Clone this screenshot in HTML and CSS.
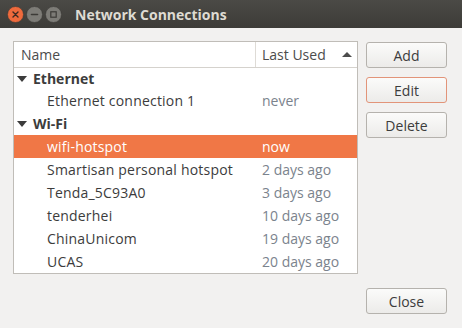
FILE: index.html
```html
<!DOCTYPE html>
<html>
<head>
<meta charset="utf-8">
<link rel="stylesheet" href="styles.css">
</head>
<body>
<div class="window">
  <div class="titlebar">
    <div class="controls">
      <svg class="ctl" width="17" height="17" viewBox="0 0 17 17"><circle cx="8.5" cy="8.5" r="8" fill="#ef6a3c" stroke="#3a3936" stroke-width="0.6"/><path d="M6 6 L11 11 M11 6 L6 11" stroke="#3c2a22" stroke-width="1.4" stroke-linecap="round"/></svg>
      <svg class="ctl" width="17" height="17" viewBox="0 0 17 17"><circle cx="8.5" cy="8.5" r="8" fill="#7d7c77" stroke="#3a3936" stroke-width="0.6"/><path d="M5.5 8.5 H11.5" stroke="#3c3b37" stroke-width="1.6" stroke-linecap="round"/></svg>
      <svg class="ctl" width="17" height="17" viewBox="0 0 17 17"><circle cx="8.5" cy="8.5" r="8" fill="#7d7c77" stroke="#3a3936" stroke-width="0.6"/><rect x="5.8" y="5.8" width="5.4" height="5.4" fill="none" stroke="#3c3b37" stroke-width="1.2"/></svg>
    </div>
    <div class="title">Network Connections</div>
  </div>
  <div class="content">
    <div class="main">
      <div class="tree">
        <div class="hdr">
          <div class="hcell name">Name</div>
          <div class="hcell used">Last Used <span class="sort"></span></div>
        </div>
        <div class="row first group"><span class="tri"></span><span class="gname">Ethernet</span></div>
        <div class="row"><span class="nm">Ethernet connection 1</span><span class="lu">never</span></div>
        <div class="row group"><span class="tri"></span><span class="gname">Wi-Fi</span></div>
        <div class="row sel"><span class="nm">wifi-hotspot</span><span class="lu">now</span></div>
        <div class="row"><span class="nm">Smartisan personal hotspot</span><span class="lu">2 days ago</span></div>
        <div class="row"><span class="nm">Tenda_5C93A0</span><span class="lu">3 days ago</span></div>
        <div class="row"><span class="nm">tenderhei</span><span class="lu">10 days ago</span></div>
        <div class="row"><span class="nm">ChinaUnicom</span><span class="lu">19 days ago</span></div>
        <div class="row"><span class="nm">UCAS</span><span class="lu">20 days ago</span></div>
      </div>
      <div class="side">
        <button class="btn">Add</button>
        <button class="btn focus">Edit</button>
        <button class="btn">Delete</button>
      </div>
    </div>
    <div class="footer">
      <button class="btn">Close</button>
    </div>
  </div>
</div>
</body>
</html>
```
FILE: styles.css
```css
* { box-sizing: border-box; }
html, body { margin: 0; padding: 0; }
body {
  width: 462px;
  height: 328px;
  overflow: hidden;
  font-family: "Open Sans", "Noto Sans", sans-serif;
  font-size: 14px;
  color: #3c3c3c;
  background: #f2f1f0;
}
.window { width: 462px; height: 328px; display: flex; flex-direction: column; }
.titlebar {
  height: 28px;
  background: linear-gradient(#4b4a46, #3d3c38);
  display: flex;
  align-items: center;
  padding-left: 7px;
}
.controls { display: flex; gap: 2px; align-items: center; margin-top: 1px; }
.ctl { display: block; }
.title {
  margin-left: 13px;
  color: #dfdbd2;
  font-weight: bold;
  font-size: 14px;
}
.content {
  flex: 1;
  display: flex;
  flex-direction: column;
  padding: 13px 15px 14px 13px;
}
.main { display: flex; gap: 8px; }
.tree {
  width: 345px;
  height: 233px;
  background: #ffffff;
  border: 1px solid #c0bdb8;
}
.hdr {
  display: grid;
  grid-template-columns: 241px 1fr;
  height: 26px;
  border-bottom: 1px solid #d5d2cd;
}
.hcell {
  display: flex;
  align-items: center;
  padding-left: 7px;
  color: #4c4c4c;
}
.hcell.used { border-left: 1px solid #dedbd6; padding-left: 6px; }
.sort {
  width: 0; height: 0;
  border-left: 5px solid transparent;
  border-right: 5px solid transparent;
  border-bottom: 5px solid #4c4c4c;
  margin-left: 16px;
  margin-top: -1px;
}
.row {
  display: grid;
  grid-template-columns: 241px 1fr;
  height: 23px;
  align-items: center;
}
.row.first { height: 21px; }
.row.group { display: flex; }
.tri {
  width: 0; height: 0;
  border-left: 5px solid transparent;
  border-right: 5px solid transparent;
  border-top: 6px solid #3c3c3c;
  margin-left: 3px;
  margin-right: 6px;
  margin-top: 1px;
}
.gname { font-weight: bold; }
.nm { padding-left: 33px; white-space: nowrap; letter-spacing: 0.2px; }
.lu { padding-left: 7px; color: #7b838d; }
.row.sel { background: #f07746; }
.row.sel .nm, .row.sel .lu { color: #ffffff; }
.side { display: flex; flex-direction: column; gap: 9px; padding-top: 1px; }
.btn {
  width: 81px;
  height: 26px;
  font-family: inherit;
  font-size: 14px;
  color: #3c3c3c;
  background: linear-gradient(#fbfbfa, #ecebe9);
  border: 1px solid #b5b2ad;
  border-radius: 3px;
  padding: 0;
}
.btn.focus { border-color: #e29479; }
.footer { margin-top: auto; display: flex; justify-content: flex-end; }
```
